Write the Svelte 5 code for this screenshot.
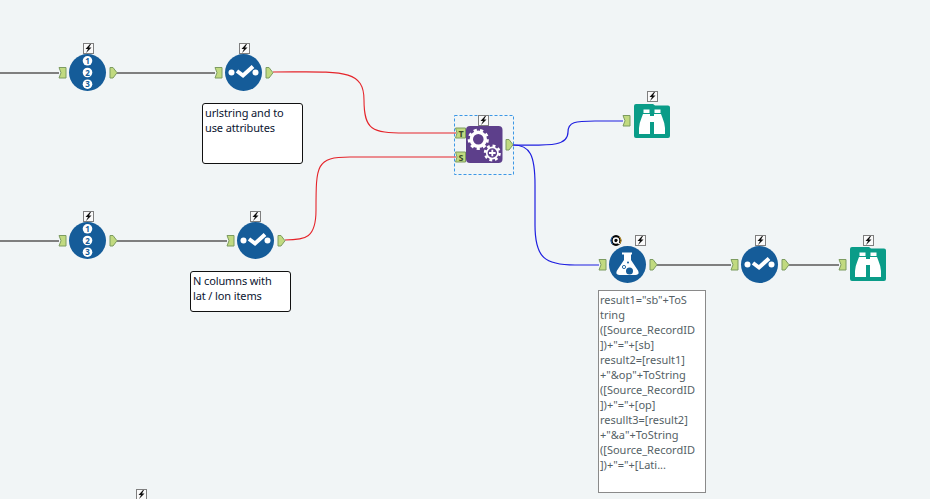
<script>
  const wires = [
    { d: 'M0 73H59', c: 'grey' },
    { d: 'M117 73H215', c: 'grey' },
    { d: 'M0 241H59', c: 'grey' },
    { d: 'M117 241H227', c: 'grey' },
    { d: 'M657 265H731', c: 'grey' },
    { d: 'M789 265H839', c: 'grey' },
    { d: 'M273 72C340 72 364 68 364 100C364 130 372 133 405 133H456', c: 'red' },
    { d: 'M285 240C306 240 316 238 316 210C316 165 316 157 350 157H456', c: 'red' },
    { d: 'M513 145C555 146 568 145 568 132C568 122 575 121 595 121H623', c: 'blue' },
    { d: 'M513 145C530 145 535 155 535 185V225C535 258 545 265 575 265H599', c: 'blue' }
  ];
  const bolts = [[83, 43], [239, 43], [83, 211], [250, 211], [478, 115], [647, 91], [635, 235], [755, 235], [863, 235], [136, 489]];
  const inputs = [[59, 67.5], [215, 67.5], [59, 235.5], [227, 235.5], [623, 115.5], [599, 259.5], [731, 259.5], [839, 259.5]];
  const outputs = [[110, 67.5], [266, 67.5], [110, 235.5], [278, 235.5], [506, 139.5], [650, 259.5], [782, 259.5]];
  const checks = [[243.5, 72.5], [255.5, 240.5], [759.5, 264.5]];
  const numbered = [[87.5, 72.5], [87.5, 240.5]];
  const browses = [[634, 104], [850, 247]];
</script>

<main class="canvas">
  <svg class="board" width="930" height="499" viewBox="0 0 930 499">
    <rect x="454.5" y="115.5" width="59" height="59" class="selection" />

    {#each wires as w}
      <path d={w.d} class="wire {w.c}" />
    {/each}

    {#each numbered as [x, y]}
      <g transform="translate({x} {y})">
        <circle r="18.5" class="blue-fill" />
        {#each [1, 2, 3] as n, i}
          <circle cy={(i - 1) * 11.7} r="4.8" fill="#fff" />
          <text y={(i - 1) * 11.7 + 3} class="digit">{n}</text>
        {/each}
      </g>
    {/each}

    {#each checks as [x, y]}
      <g transform="translate({x} {y})">
        <circle r="18.5" class="blue-fill" />
        <circle cx="-12" r="3" fill="#fff" />
        <circle cx="12" r="3" fill="#fff" />
        <path d="M-6.500 -1.500L-0.500 3L9.500 -6" class="tick" />
      </g>
    {/each}

    <!-- Formula -->
    <g transform="translate(627.5 264.5)">
      <circle r="18.5" class="blue-fill" />
      <path d="M-5.500 -12H4.500V-10H3.500V-4.500L10.500 6Q12.500 10.500 8 10.500H-8Q-12.500 10.500 -10.500 6L-3.500 -4.500V-10H-5.500Z" fill="#fff" />
      <circle cx="2" cy="6.500" r="3.500" class="blue-fill" />
      <circle cx="-3.500" cy="2.500" r="1.600" fill="none" stroke="#2a6ba3" stroke-width="1" />
      <circle cx="0.500" cy="-2" r="1" class="blue-fill" />
    </g>

    <!-- Q badge -->
    <g transform="translate(616 240.5)">
      <circle r="5.400" fill="#050505" />
      <path d="M3.500 -3.500A5 5 0 0 1 3.500 3.500" fill="none" stroke="#d8a020" stroke-width="1" />
      <path d="M-3.500 -3.500A5 5 0 0 0 -3.500 3.500" fill="none" stroke="#2a70c0" stroke-width="1" />
      <circle r="2.500" fill="none" stroke="#fff" stroke-width="1.600" />
      <path d="M1 1L3.500 3.500" stroke="#fff" stroke-width="1.300" />
    </g>

    <!-- Gear tool -->
    <rect x="466" y="126" width="36.5" height="37" rx="4" fill="#5d3f8b" />
    <circle cx="478.3" cy="139.3" r="9.200" class="teeth big" />
    <circle cx="478.3" cy="139.3" r="7" class="ring" />
    <circle cx="492.3" cy="153" r="8.500" fill="#5d3f8b" />
    <circle cx="492.3" cy="153" r="7.200" class="teeth small" />
    <circle cx="492.3" cy="153" r="5.600" class="ring thin" />
    <path d="M492.3 149.7V156.3M489 153H495.6" class="plus" />

    {#each browses as [x, y]}
      <g transform="translate({x} {y})">
        <path d="M2 0H19L21 1.500H34Q36 1.500 36 3.500V32Q36 34 34 34H2Q0 34 0 32V2Q0 0 2 0Z" fill="#0a9c88" />
        <path
          d="M9.500 5.500H15.500V9H9.500ZM20.500 5.500H26.500V9H20.500ZM9 10H16V12H20V10H27L28.500 14Q30.700 19 31 24V30H20V18H16V30H5V24Q5.300 19 7.500 14Z"
          fill="#fff"
        />
      </g>
    {/each}

    {#each inputs as [x, y]}
      <path transform="translate({x} {y})" d="M0 0H7V10.500H0L2 5.250Z" class="anchor" />
    {/each}
    {#each outputs as [x, y]}
      <path transform="translate({x} {y})" d="M0 0H3L7 5.250L3 10.500H0Z" class="anchor" />
    {/each}

    <path transform="translate(455.500 128)" d="M0 0H10V10H0L1.500 5Z" class="anchor" />
    <text x="461" y="136.500" class="port">T</text>
    <path transform="translate(455.500 152)" d="M0 0H10V10H0L1.500 5Z" class="anchor" />
    <text x="461" y="160.500" class="port">S</text>

    {#each bolts as [x, y]}
      <g transform="translate({x} {y})">
        <rect x="0.500" y="0.500" width="10" height="10" class="bolt-box" />
        <path d="M7 1L2.500 6H5L3 10L8.500 4.500H6L8 1Z" fill="#111" />
      </g>
    {/each}
  </svg>

  <div class="note one">urlstring and to<br />use attributes</div>
  <div class="note two">N columns with<br />lat / lon items</div>
  <div class="note three">
    result1="sb"+ToS<br />tring<br />([Source_RecordID<br />])+"="+[sb]<br />result2=[result1]<br />+"&amp;op"+ToString<br />([Source_RecordID<br />])+"="+[op]<br />resullt3=[result2]<br />+"&amp;a"+ToString<br />([Source_RecordID<br />])+"="+[Lati...
  </div>
</main>

<style>
  :global(body) {
    margin: 0;
    background: #f1f5f6;
  }
  .canvas {
    position: relative;
    width: 930px;
    height: 499px;
    overflow: hidden;
    background: #f1f5f6;
    font-family: "Noto Sans", "DejaVu Sans", sans-serif;
  }
  .board {
    position: absolute;
    left: 0;
    top: 0;
    display: block;
  }
  .selection {
    fill: none;
    stroke: #3b97e6;
    stroke-width: 1;
    stroke-dasharray: 3 2;
  }
  .wire {
    fill: none;
  }
  .grey {
    stroke: #7f7f7f;
    stroke-width: 2;
  }
  .red {
    stroke: #e5242a;
    stroke-width: 1.1;
  }
  .blue {
    stroke: #1f1fe0;
    stroke-width: 1.2;
  }
  .blue-fill {
    fill: #155c99;
  }
  .digit {
    font: 700 8px "Noto Sans", sans-serif;
    fill: #155c99;
    text-anchor: middle;
  }
  .tick {
    fill: none;
    stroke: #fff;
    stroke-width: 4;
  }
  .teeth {
    fill: none;
    stroke: #fff;
  }
  .teeth.big {
    stroke-width: 2.8;
    stroke-dasharray: 3.2 3.2;
  }
  .teeth.small {
    stroke-width: 2.6;
    stroke-dasharray: 2.83 2.83;
  }
  .ring {
    fill: none;
    stroke: #fff;
    stroke-width: 3.4;
  }
  .ring.thin {
    stroke-width: 1.7;
  }
  .plus {
    stroke: #fff;
    stroke-width: 1.8;
  }
  .anchor {
    fill: #c1da80;
    stroke: #7d9c60;
    stroke-width: 1;
  }
  .port {
    font: 700 9px "Noto Sans", sans-serif;
    fill: #3c4a28;
    text-anchor: middle;
  }
  .bolt-box {
    fill: #fafafa;
    stroke: #7f7f7f;
  }
  .note {
    position: absolute;
    box-sizing: border-box;
    background: #fff;
    font-size: 11px;
    line-height: 15px;
    color: #0b1530;
  }
  .one {
    left: 202px;
    top: 103px;
    width: 101px;
    height: 61px;
    padding: 1px 2px;
    border: 1px solid #111;
    border-radius: 3px;
    letter-spacing: -0.12px;
  }
  .two {
    left: 190px;
    top: 271px;
    width: 101px;
    height: 41px;
    padding: 1px 2px;
    border: 1px solid #111;
    border-radius: 3px;
    letter-spacing: -0.12px;
  }
  .three {
    left: 598px;
    top: 290px;
    width: 108px;
    height: 203px;
    padding: 1px 1px;
    border: 1px solid #8a8a8a;
    color: #555f66;
  }
</style>
